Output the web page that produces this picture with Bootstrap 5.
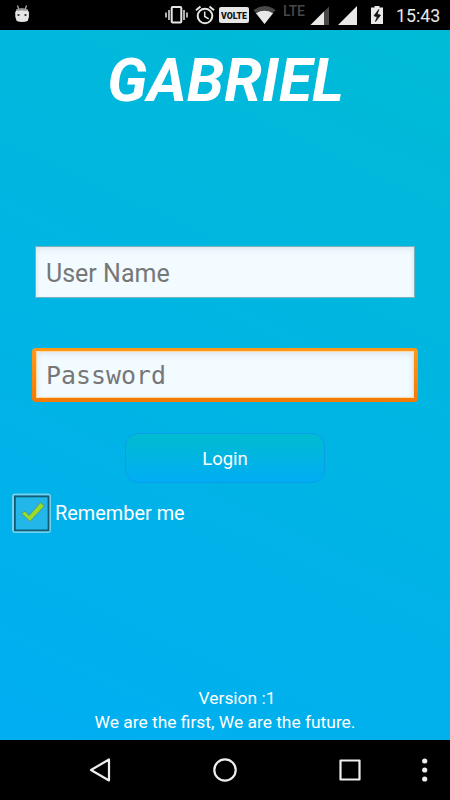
<!DOCTYPE html>
<html lang="en">
<head>
<meta charset="utf-8">
<meta name="viewport" content="width=device-width, initial-scale=1">
<title>Gabriel</title>
<link href="https://cdn.jsdelivr.net/npm/bootstrap@5.3.0/dist/css/bootstrap.min.css" rel="stylesheet">
<style>
body{font-family:Roboto,sans-serif;background:#000}
.phone{width:450px;height:800px}
.statusbar{height:30px}
.statusbar svg{height:30px;flex:none}
.lte{font-size:14px;line-height:23px;height:30px;width:28px;padding-left:7px;color:#484848;font-weight:500;letter-spacing:-.2px}
.clock{font-size:17.800px;line-height:32px;height:30px;width:54px;padding-left:12px;margin-right:12px;color:#e8e8e8;white-space:nowrap}
.screen{background:linear-gradient(25deg,#00aef2,#00bbd6)}
.title{font-size:60.5px;line-height:70px;font-weight:700;font-style:italic;margin:16px 0 0 1px;height:71px}
.field{height:51px;width:379px;border-radius:0;border:1px solid #78b3bd;background:#f2fbff;padding:2px 9px 0;font-size:25px;color:#777;box-shadow:inset 0 4px 6px -2px #dde6ea,inset 3px 0 4px -2px #e2ebef,inset -3px 0 4px -2px #e2ebef}
.field::placeholder{color:#777;opacity:1}
.user{height:52px;width:380px;margin-top:129px;padding-left:10px}
.ring{margin-top:50px;width:386px;height:54px;padding:3px 4px 4px;border-radius:4px;background:linear-gradient(#ff981a,#f27a05)}
.ring .field{height:47px;width:378px;border-color:#ffd9a6;font-family:"DejaVu Sans Mono",monospace;font-size:24.9px}
.login{width:200px;height:50px;margin-top:31px;border:1px solid #0b9de8;border-radius:13px;background:linear-gradient(#00bcd0,#00adf4);font-size:18.5px;padding:3px 0 0}
.remember{margin:10px 0 0 12px;height:40px}
.remember span{font-size:19.9px;line-height:42px;margin-left:4px}
.foot{font-size:17.4px;line-height:24px;margin-bottom:6px}
.navkeys{height:60px}
.navkeys svg{display:block}
</style>
</head>
<body>
<div class="phone d-flex flex-column overflow-hidden">
  <header class="statusbar d-flex align-items-start">
    <svg class="me-auto" width="40" viewBox="0.500 0 40 30"><path d="M18 5.500l1.300 4M27 5.500l-1.300 4" stroke="#aaa" stroke-width="1.300"/><path d="M17 9.500q5.500-2 11 0l1.500 3q.5 5-1.300 8.500-5.500 2-11 0-2-4-1.500-8.500z" fill="#e6e6e6"/><path d="M17.300 9.300q5-1.700 10 0l.7 1.700q-5.500-1-11.500 0z" fill="#999"/><path d="M18 14h2v2h-2zm7 0h2v2h-2z" fill="#444"/></svg>
    <svg width="30" viewBox="165 0 30 30" fill="none" stroke="#e6e6e6"><rect x="171.700" y="7" width="9.600" height="15.500" rx="1" stroke-width="2"/><path d="M169 10v10M184 10v10M166 12.500v5M187 12.500v5" stroke-width="1.500"/></svg>
    <svg width="24" viewBox="195 0 24 30" fill="none" stroke="#e6e6e6"><circle cx="205" cy="16" r="7.300" stroke-width="2"/><path d="M204.700 11.500v5l4 2.300" stroke-width="1.500"/><path d="M196 10.300l4.500-3.800M214 10.300l-4.500-3.800" stroke-width="2"/></svg>
    <svg width="34" viewBox="219 0 34 30"><rect x="219" y="7" width="30" height="16" rx="2" fill="#e6e6e6"/><text x="234" y="18.500" text-anchor="middle" font-family="Roboto,sans-serif" font-size="9.500" font-weight="900" textLength="26" lengthAdjust="spacingAndGlyphs" fill="#111">VOLTE</text></svg>
    <svg width="23" viewBox="253 0 23 30"><path d="M264.500 24L253.500 10q11-8 22 0z" fill="#484848"/><path d="M264.500 24l-8.500-10.800q8.500-4.800 17 0z" fill="#e8e8e8"/></svg>
    <div class="lte">LTE</div>
    <svg width="34" viewBox="304 0 34 30"><path d="M310.500 25L329 6.500V25z" fill="#484848"/><path d="M310.500 25L324 11.500V25z" fill="#e8e8e8"/></svg>
    <svg width="33" viewBox="338 0 33 30"><path d="M338 25l19-19v19z" fill="#e8e8e8"/></svg>
    <svg width="13" viewBox="371 0 13 30"><path d="M371 7.500h3.500V6h5v1.500H383V24h-12z" fill="#e8e8e8"/><path d="M378.800 9.500l-4.800 6.300 3.300 1-1.800 4.700 5-6.300-3.300-1z" fill="#111" stroke="#111" stroke-width=".8"/></svg>
    <div class="clock">15:43</div>
  </header>

  <main class="screen flex-grow-1 d-flex flex-column align-items-center text-white">
    <h1 class="title">GABRIEL</h1>
    <input class="form-control field user" type="text" placeholder="User Name" aria-label="User Name">
    <div class="ring"><input class="form-control field" type="password" placeholder="Password" aria-label="Password"></div>
    <button class="btn text-white login" type="button">Login</button>
    <label class="remember d-flex align-self-start">
      <svg width="39" height="40" viewBox="12 493 39 40"><rect x="13" y="494.500" width="37" height="37.500" rx="2" fill="#2bb9e9" stroke="#72d2ef" stroke-width="2"/><rect x="14.900" y="496.400" width="33.600" height="34" fill="#23b7e9" stroke="#105d78" stroke-width="1.800"/><path d="M21.500 513.500l3.500-2.500 4 4.500L40.500 502.500l4 3.500L30 521.500z" fill="#98dc2b" stroke="#43899a" stroke-width=".8"/></svg>
      <span>Remember me</span>
    </label>
    <footer class="foot mt-auto text-center"><div class="ps-4">Version :1</div><div>We are the first, We are the future.</div></footer>
  </main>

  <nav class="navkeys">
    <svg width="450" height="60" viewBox="0 740 450 60" fill="none" stroke="#eee" stroke-width="2.200" stroke-linejoin="round"><path d="M91 770l18-10.500v21z"/><circle cx="225" cy="770" r="10.700"/><rect x="340.500" y="760.500" width="19" height="19"/><g fill="#eee" stroke="none"><circle cx="424.700" cy="761" r="2.600"/><circle cx="424.700" cy="770" r="2.600"/><circle cx="424.700" cy="779" r="2.600"/></g></svg>
  </nav>
</div>
<script src="https://cdn.jsdelivr.net/npm/bootstrap@5.3.0/dist/js/bootstrap.bundle.min.js"></script>
</body>
</html>
